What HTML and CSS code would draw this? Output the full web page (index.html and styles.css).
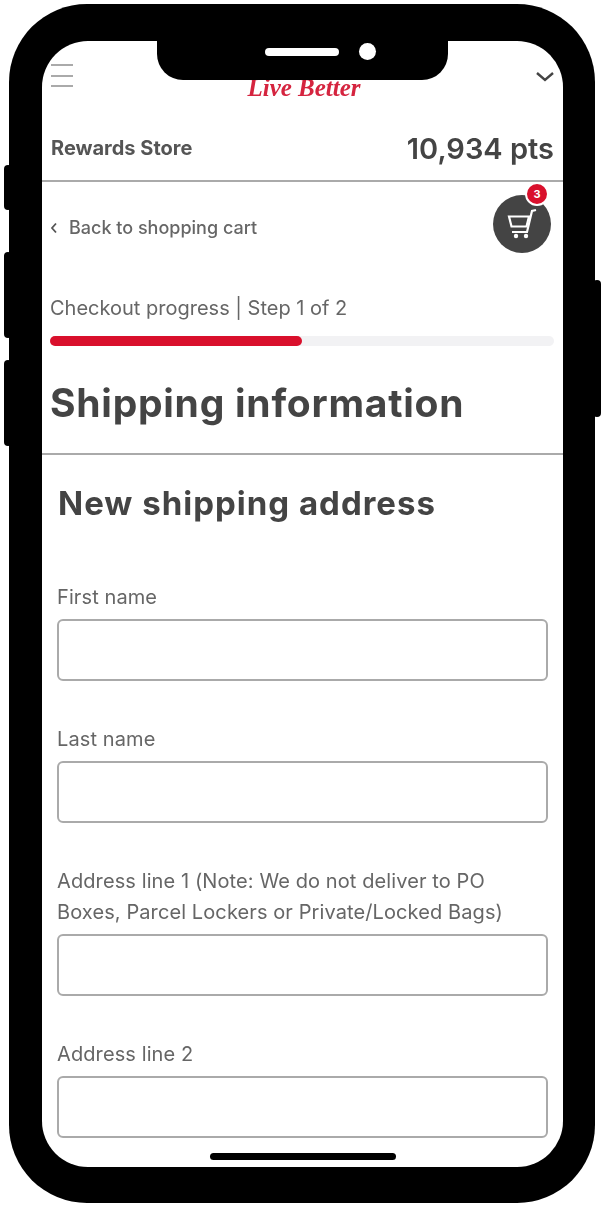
FILE: index.html

```html
<!DOCTYPE html>
<html lang="en">
<head>
<meta charset="UTF-8">
<meta name="viewport" content="width=device-width, initial-scale=1.0">
<title>Shipping information</title>
<link rel="stylesheet" href="styles.css">
</head>
<body>
<div class="phone">
  <span class="side-btn side-mute"></span>
  <span class="side-btn side-up"></span>
  <span class="side-btn side-down"></span>
  <span class="side-btn side-power"></span>

  <div class="screen">
    <div class="notch">
      <span class="speaker"></span>
      <span class="camera"></span>
    </div>

    <header class="topbar">
      <div class="burger"><span></span><span></span><span></span></div>
      <div class="logo">Live Better</div>
      <svg class="chevron" width="20" height="12" viewBox="0 0 20 12">
        <path d="M2 2l8 7 8-7" fill="none" stroke="#444" stroke-width="2.4"/>
      </svg>
    </header>

    <div class="store-row">
      <span class="store-name">Rewards Store</span>
      <span class="store-pts">10,934 pts</span>
    </div>

    <div class="back-row">
      <a class="back-link" href="#">
        <svg width="8" height="12" viewBox="0 0 8 12">
          <path d="M6 1.500L2 6l4 4.500" fill="none" stroke="#555" stroke-width="1.800"/>
        </svg>
        Back to shopping cart
      </a>
      <div class="cart">
        <svg width="58" height="58" viewBox="0 0 58 58">
          <path d="M43 15l-4 1-5 21H19" fill="none" stroke="#fff" stroke-width="2.200"/>
          <path d="M16 21.500h20l-2.500 10H18.500z" fill="none" stroke="#fff" stroke-width="2.200"/>
          <circle cx="23" cy="41" r="2.200" fill="#fff"/>
          <circle cx="33" cy="41" r="2.200" fill="#fff"/>
        </svg>
        <span class="badge">3</span>
      </div>
    </div>

    <div class="progress">
      <div class="progress-label">Checkout progress | Step 1 of 2</div>
      <div class="progress-track"><div class="progress-fill"></div></div>
    </div>

    <h1 class="page-title">Shipping information</h1>

    <form class="address-form">
      <h2>New shipping address</h2>

      <label for="firstName">First name</label>
      <input type="text" id="firstName">

      <label for="lastName">Last name</label>
      <input type="text" id="lastName">

      <label for="address1">Address line 1 (Note: We do not deliver to PO Boxes, Parcel Lockers or Private/Locked Bags)</label>
      <input type="text" id="address1">

      <label for="address2">Address line 2</label>
      <input type="text" id="address2">
    </form>

    <div class="home-bar"></div>
  </div>
</div>
</body>
</html>
```

FILE: styles.css

```css
html, body {
  margin: 0;
  padding: 0;
  background-color: #fff;
}

body {
  font-family: Inter, "Noto Sans", sans-serif;
  height: 1207px;
  overflow: hidden;
}

.phone {
  position: relative;
  width: 586px;
  height: 1199px;
  margin: 4px 0 0 9px;
  padding: 37px 32px 36px 33px;
  box-sizing: border-box;
  background-color: #000;
  border-radius: 78px;
}

.side-btn {
  position: absolute;
  width: 8px;
  background-color: #000;
  border-radius: 4px;
}

.side-mute {
  left: -5px;
  top: 161px;
  height: 45px;
}

.side-up {
  left: -5px;
  top: 248px;
  height: 86px;
}

.side-down {
  left: -5px;
  top: 356px;
  height: 86px;
}

.side-power {
  right: -6px;
  top: 276px;
  height: 137px;
}

.screen {
  position: relative;
  height: 100%;
  background-color: #fff;
  border-radius: 46px;
  overflow: hidden;
  filter: blur(0.4px);
}

.notch {
  position: absolute;
  left: 115px;
  top: 0;
  width: 291px;
  height: 39px;
  background-color: #000;
  border-radius: 0 0 26px 26px;
  z-index: 2;
}

.speaker {
  position: absolute;
  left: 108px;
  top: 7px;
  width: 74px;
  height: 8px;
  background-color: #fff;
  border-radius: 4px;
}

.camera {
  position: absolute;
  left: 202px;
  top: 2px;
  width: 17px;
  height: 17px;
  background-color: #fff;
  border-radius: 50%;
}

.topbar {
  display: flex;
  justify-content: space-between;
  align-items: flex-start;
  height: 85px;
  padding: 23px 8px 0 9px;
  box-sizing: border-box;
}

.burger {
  width: 22px;
}

.burger span {
  display: block;
  height: 2px;
  margin-bottom: 8.500px;
  background-color: #aaa;
}

.logo {
  margin-top: 9px;
  font-family: "Liberation Serif", serif;
  font-style: italic;
  font-weight: bold;
  font-size: 25px;
  line-height: 30px;
  color: #d5243f;
}

.chevron {
  margin-top: 7px;
}

.store-row {
  display: flex;
  justify-content: space-between;
  align-items: center;
  height: 56px;
  padding: 0 9px 10px 9px;
  box-sizing: border-box;
  border-bottom: 2px solid #aaa;
}

.store-name {
  font-size: 20px;
  font-weight: 700;
  color: #555;
}

.store-pts {
  font-size: 29px;
  font-weight: 600;
  color: #444;
}

.back-row {
  display: flex;
  justify-content: space-between;
  align-items: flex-start;
  height: 114px;
  padding: 13px 12px 0 8px;
  box-sizing: border-box;
}

.back-link {
  display: flex;
  align-items: center;
  gap: 11px;
  margin-top: 22px;
  font-size: 18px;
  font-weight: 500;
  color: #666;
  text-decoration: none;
}

.cart {
  position: relative;
  width: 58px;
  height: 58px;
  background-color: #444;
  border-radius: 50%;
}

.badge {
  position: absolute;
  right: 2px;
  top: -13px;
  width: 20px;
  height: 20px;
  border: 2px solid #fff;
  border-radius: 50%;
  background-color: #d9102c;
  color: #fff;
  font-size: 11px;
  font-weight: 700;
  line-height: 20px;
  text-align: center;
}

.progress {
  padding: 0 9px 0 8px;
}

.progress-label {
  font-size: 20px;
  line-height: 24px;
  color: #666;
}

.progress-track {
  height: 10px;
  margin-top: 16px;
  background-color: #f2f2f4;
  border-radius: 5px;
}

.progress-fill {
  width: 50%;
  height: 100%;
  background-color: #d9102c;
  border-radius: 5px;
}

.page-title {
  margin: 0;
  padding: 0 8px;
  height: 109px;
  border-bottom: 2px solid #aaa;
  box-sizing: border-box;
  font-size: 39px;
  font-weight: 700;
  letter-spacing: 0.75px;
  line-height: 114px;
  color: #444;
}

.address-form {
  padding: 0 15px;
}

.address-form h2 {
  margin: 0 0 0 1px;
  font-size: 33px;
  font-weight: 700;
  letter-spacing: 1px;
  line-height: 40px;
  padding-top: 28px;
  color: #444;
}

.address-form label {
  display: block;
  margin-top: 59px;
  font-size: 20px;
  line-height: 31px;
  letter-spacing: 0.1px;
  color: #666;
}

.address-form input {
  display: block;
  width: 100%;
  height: 62px;
  margin-top: 6px;
  box-sizing: border-box;
  border: 2px solid #aaa;
  border-radius: 6px;
  background-color: #fff;
}

.address-form input + label {
  margin-top: 43px;
}

.home-bar {
  position: absolute;
  left: 168px;
  bottom: 7px;
  width: 186px;
  height: 7px;
  background-color: #000;
  border-radius: 4px;
}
```
